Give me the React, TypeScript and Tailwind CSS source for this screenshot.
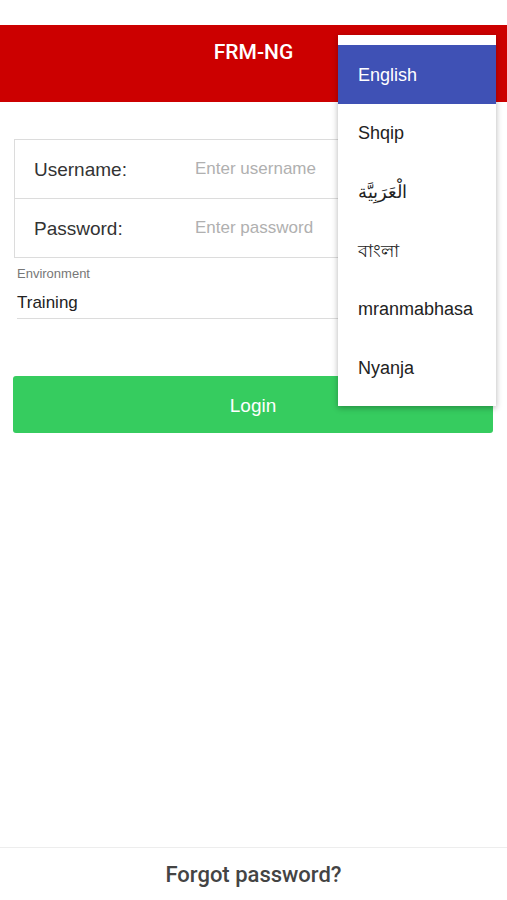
import React from "react";

const languages = ["English", "Shqip", "الْعَرَبِيَّة", "বাংলা", "mranmabhasa", "Nyanja"];

export default function App() {
  return (
    <div
      className="relative flex min-h-[900px] flex-col bg-white text-[#333]"
      style={{ fontFamily: '"Liberation Sans", Arial, "Noto Sans", sans-serif' }}
    >
      {/* status bar space */}
      <div className="h-[25px]" />

      {/* Header */}
      <header className="flex h-[77px] items-start justify-center bg-[#cc0000] pt-[12px]">
        <h1 className="font-['Roboto',sans-serif] text-[21px] font-medium text-white">FRM-NG</h1>
      </header>

      {/* Form */}
      <main className="flex flex-col px-[14px] pt-[37px]">
        <div className="flex flex-col border border-[#dcdcdc]">
          <div className="flex h-[59px] items-center border-b border-[#dcdcdc]">
            <span className="mt-[3px] w-[180px] pl-[19px] text-[19px] text-[#333]">Username:</span>
            <span className="text-[17px] text-[#b0b0b0]">Enter username</span>
          </div>
          <div className="flex h-[58px] items-center">
            <span className="mt-[2px] w-[180px] pl-[19px] text-[19px] text-[#333]">Password:</span>
            <span className="text-[17px] text-[#b0b0b0]">Enter password</span>
          </div>
        </div>

        <div className="mt-[6px] flex flex-col px-[3px]">
          <span className="text-[13px] text-[#777]">Environment</span>
          <span className="mt-[6px] border-b border-[#dcdcdc] pb-[3px] text-[17px] text-[#222]">
            Training
          </span>
        </div>

        <button className="mt-[57px] -ml-px flex h-[57px] items-center justify-center rounded-[3px] bg-[#36cc5f] pt-[3px] text-[19px] text-white">
          Login
        </button>
      </main>

      {/* Footer */}
      <footer className="mt-auto flex h-[53px] items-center justify-center border-t border-[#ededed]">
        <span className="font-['Roboto',sans-serif] text-[22px] font-medium text-[#444]">Forgot password?</span>
      </footer>

      {/* Language menu */}
      <div className="absolute left-[338px] top-[35px] w-[158px] bg-white pt-[10px] pb-[9px] shadow-[0_2px_6px_rgba(0,0,0,0.3)]">
        {languages.map((lang, i) => (
          <div
            key={lang}
            className={
              i === 0
                ? "flex h-[58.6px] items-center bg-[#3f51b5] px-[20px] pt-[2px] text-[18px] text-white"
                : "flex h-[58.6px] items-center px-[20px] pt-[2px] text-[18px] text-[#222]"
            }
          >
            {lang}
          </div>
        ))}
      </div>
    </div>
  );
}
